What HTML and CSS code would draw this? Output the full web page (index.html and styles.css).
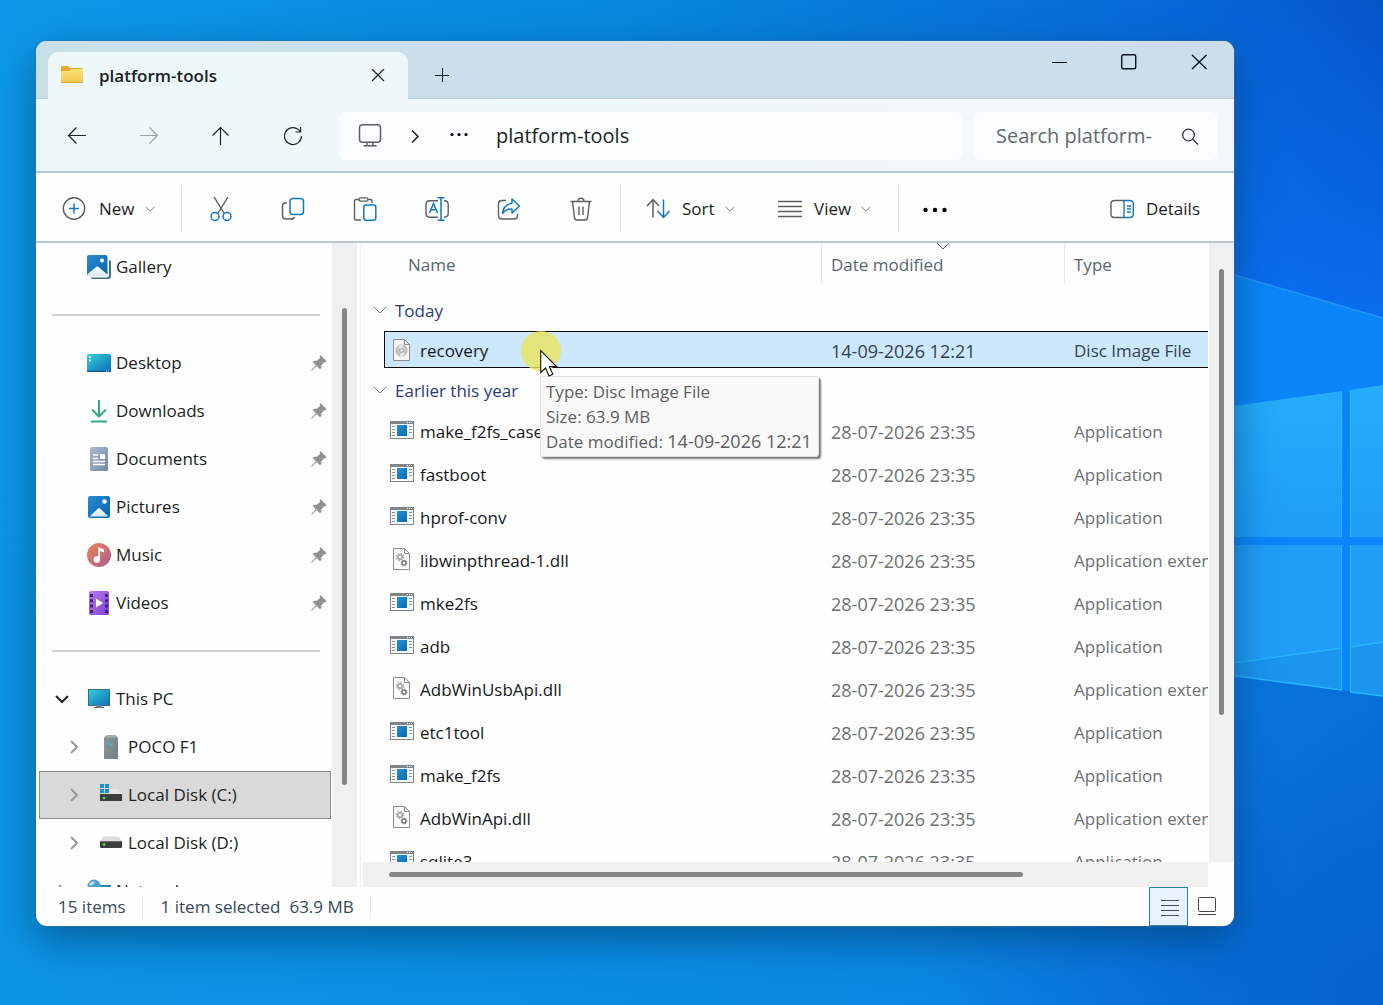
FILE: index.html
```html
<!DOCTYPE html>
<html lang="en">
<head>
<meta charset="utf-8">
<meta name="viewport" content="width=device-width, initial-scale=1">
<title>platform-tools</title>
<link rel="stylesheet" href="styles.css">
</head>
<body>
<svg class="defs" aria-hidden="true">
  <defs>
    <linearGradient id="g-blue" x1="0" y1="0" x2="1" y2="1"><stop offset="0" stop-color="#2a8bd0"/><stop offset="1" stop-color="#0464ae"/></linearGradient>
    <linearGradient id="g-desk" x1="0" y1="0" x2="1" y2="1"><stop offset="0" stop-color="#36cde0"/><stop offset="1" stop-color="#0b6fb4"/></linearGradient>
    <linearGradient id="g-hill" x1="0" y1="0" x2="0" y2="1"><stop offset="0" stop-color="#fff"/><stop offset="1" stop-color="#d5e9f8"/></linearGradient>
    <linearGradient id="g-doc" x1="0" y1="0" x2="1" y2="1"><stop offset="0" stop-color="#a9b9c9"/><stop offset="1" stop-color="#7289a3"/></linearGradient>
    <linearGradient id="g-music" x1="0" y1="0" x2="1" y2="1"><stop offset="0" stop-color="#ea8353"/><stop offset="1" stop-color="#ab5f94"/></linearGradient>
    <linearGradient id="g-video" x1="0" y1="0" x2="1" y2="1"><stop offset="0" stop-color="#b97bea"/><stop offset="1" stop-color="#7d42d6"/></linearGradient>
    <linearGradient id="g-phone" x1="0" y1="0" x2="1" y2="1"><stop offset="0" stop-color="#8e999f"/><stop offset="1" stop-color="#737c82"/></linearGradient>
    <linearGradient id="g-folder" x1="0" y1="0" x2="0" y2="1"><stop offset="0" stop-color="#fbe07e"/><stop offset="1" stop-color="#f2c744"/></linearGradient>
    <linearGradient id="g-exe" x1="0" y1="0" x2="1" y2="1"><stop offset="0" stop-color="#2494d8"/><stop offset="1" stop-color="#0468b4"/></linearGradient>
  </defs>
  <symbol id="down" viewBox="0 0 14 14"><path d="M1 4L7 10L13 4" fill="none" stroke="currentColor"/></symbol>
  <symbol id="right" viewBox="0 0 14 14"><path d="M4 1L10 7L4 13" fill="none" stroke="currentColor"/></symbol>
  <symbol id="pin" viewBox="0 0 16 16"><path d="M9.600 .300L15.700 6.200L14.300 7.300L13.200 7.200L10.500 10.200L10.200 13.200L9 14.300L5.600 10.900L1 15.800L.200 15.100L4.900 10.300L1.800 7.100L2.900 5.900L6 5.600L9 2.900L8.700 1.300Z" fill="#8f9396"/></symbol>
  <symbol id="drive" viewBox="0 0 24 24"><path d="M4 5.500H20L23 11H1Z" fill="#dcdcdc"/><rect x="1" y="10" width="22" height="7" rx="1" fill="#3c3f40"/><rect x="1" y="10" width="22" height="1" fill="#6b6b6b"/><circle cx="5" cy="13.500" r="1.300" fill="#62d84e"/></symbol>
  <symbol id="exe" viewBox="0 0 24 24"><rect x=".5" y="3.500" width="23" height="17" fill="#f7fbfd" stroke="#7f8588"/><path d="M0 3H24V6H0Z" fill="#7f8588"/><path d="M17 4.500H18M19 4.500H20M21 4.500H22" stroke="#fff"/><path d="M2 8.500H5M2 11.500H5M2 14.500H5M2 17.500H5M19 8.500H22M19 11.500H22M19 14.500H22" stroke="#8b979e"/><rect x="7" y="7" width="10" height="11" fill="url(#g-exe)"/></symbol>
  <symbol id="dll" viewBox="0 0 24 24"><path d="M3.500 1.500H14.500L19.500 6.500V22.500H3.500Z" fill="#fcfcfc" stroke="#8b8b8b"/><path d="M14.500 1.500V6.500H19.500" fill="none" stroke="#8b8b8b"/><circle cx="10" cy="10" r="2.200" fill="none" stroke="#aaa" stroke-width="1.800"/><circle cx="10" cy="10" r="3.700" fill="none" stroke="#aaa" stroke-width="1.200" stroke-dasharray="1.450 1.450"/><circle cx="14" cy="16" r="2" fill="none" stroke="#777" stroke-width="1.500"/><circle cx="14" cy="16" r="3" fill="none" stroke="#777" stroke-width=".8" stroke-dasharray="1.200 1.150"/></symbol>
  <symbol id="img" viewBox="0 0 24 24"><path d="M3.500 1.500H14.500L19.500 6.500V22.500H3.500Z" fill="#f6f6f6" stroke="#8b8b8b"/><path d="M14.500 1.500V6.500H19.500" fill="none" stroke="#8b8b8b"/><circle cx="11.500" cy="12.500" r="5.500" fill="#c5c7c9" stroke="#aaa"/><path d="M11.500 12.500L8 8.500A5.500 5.500 0 0 1 13 7.200ZM11.500 12.500L15 16.500A5.500 5.500 0 0 1 10 17.800Z" fill="#e8e8e8"/><circle cx="11.500" cy="12.500" r="1.800" fill="#fff" stroke="#999"/></symbol>
</svg>

<main class="desktop">
  <svg class="wallpaper" viewBox="0 0 1383 1005" preserveAspectRatio="xMaxYMid slice" aria-hidden="true">
    <defs>
      <linearGradient id="w-base" x1="0" y1="0" x2="1" y2="0"><stop offset="0" stop-color="#0c98e8"/><stop offset=".45" stop-color="#0788dd"/><stop offset=".85" stop-color="#0668d8"/><stop offset="1" stop-color="#0555c8"/></linearGradient>
      <linearGradient id="w-low" x1="0" y1="0" x2="1" y2="0"><stop offset="0" stop-color="#0c94e4"/><stop offset=".5" stop-color="#0a8be2"/><stop offset=".9" stop-color="#0a80e4"/><stop offset="1" stop-color="#0878e0"/></linearGradient>
      <linearGradient id="w-fade" x1="0" y1="0" x2="0" y2="1"><stop offset=".45" stop-color="#fff" stop-opacity="0"/><stop offset=".7" stop-color="#fff"/></linearGradient>
      <mask id="w-mask"><rect width="1383" height="1005" fill="url(#w-fade)"/></mask>
      <linearGradient id="w-right" x1="0" y1="0" x2="0" y2="1"><stop offset="0" stop-color="#0a70f6" stop-opacity="0"/><stop offset="1" stop-color="#0a72f8"/></linearGradient>
      <linearGradient id="w-pane" x1="0" y1="0" x2="0" y2="1"><stop offset="0" stop-color="#25adfa"/><stop offset="1" stop-color="#1f9df8"/></linearGradient>
      <radialGradient id="w-corner" gradientUnits="userSpaceOnUse" cx="1383" cy="1005" r="460"><stop offset="0" stop-color="#0562d0"/><stop offset=".3" stop-color="#0562d0" stop-opacity=".8"/><stop offset="1" stop-color="#0562d0" stop-opacity="0"/></radialGradient>
    </defs>
    <rect width="1383" height="1005" fill="url(#w-base)"/>
    <path d="M1100 0H1383V320H1100Z" fill="url(#w-right)" opacity=".8"/>
    <rect width="1383" height="1005" fill="url(#w-low)" mask="url(#w-mask)"/>
    <rect width="1383" height="1005" fill="url(#w-corner)"/>
    <path d="M1183 260L1383 318V696L1183 669Z" fill="#0b86f8"/>
    <path d="M1183 260L1383 318" stroke="#2396f6" stroke-width="1.500"/>
    <path d="M1183 413L1342 391V537H1183ZM1350 390L1383 385V537H1350Z" fill="url(#w-pane)"/>
    <path d="M1183 545H1342V690L1183 669ZM1350 545H1383V696L1350 692Z" fill="#209df7"/>
    <path d="M1183 670L1342 648V690L1183 669ZM1350 647L1383 642V696L1350 692Z" fill="#1b95ee"/>
    <path d="M1183 670L1342 648M1350 647L1383 642M1341.500 391V537M1341.500 545V690M1183 669L1342 690M1350 692L1383 696M1350.500 390V537M1350.500 545V692" stroke="#27b6fb" stroke-width="1.300" fill="none"/>
  </svg>

  <section class="window" aria-label="platform-tools">
    <header class="titlebar">
      <div class="tab">
        <svg class="i24" viewBox="0 0 24 24"><path d="M1 3.500Q1 2 2.500 2H8L10.500 4H21.500Q23 4 23 5.500V18H1Z" fill="#e2ab2d"/><path d="M1 7H9L11 5H23V18Q23 19 22 19H2Q1 19 1 18Z" fill="url(#g-folder)"/><path d="M1 18.500H23" stroke="#dba93a"/></svg>
        <span class="tab-name">platform-tools</span>
        <button class="plain" aria-label="Close tab"><svg class="i14" viewBox="0 0 14 14"><path d="M1 0L13 12M13 0L1 12" stroke="#1c2226" stroke-width="1.200"/></svg></button>
      </div>
      <button class="plain new-tab" aria-label="New tab"><svg class="i14" viewBox="0 0 14 14"><path d="M0 7.500H14M7.500 0V14" stroke="#1c2226"/></svg></button>
      <div class="caption">
        <button class="plain" aria-label="Minimize"><svg class="i16" viewBox="0 0 16 16"><path d="M1 8.500H16" stroke="#111" stroke-width="1"/></svg></button>
        <button class="plain" aria-label="Maximize"><svg class="i16" viewBox="0 0 16 16"><rect x=".7" y=".7" width="14" height="14" rx="1.500" fill="none" stroke="#0b1620" stroke-width="1.400"/></svg></button>
        <button class="plain" aria-label="Close"><svg class="i16" viewBox="0 0 16 16"><path d="M1 1L15.500 15M15.500 1L1 15" stroke="#0b1620" stroke-width="1.400"/></svg></button>
      </div>
    </header>

    <div class="navbar">
      <div class="nav-buttons">
        <button class="plain" aria-label="Back"><svg class="i20" viewBox="0 0 20 20"><path d="M19 9.500H1.500M9.500 1.500L1.500 9.500L9.500 17.500" fill="none" stroke="#1c2226" stroke-width="1.200"/></svg></button>
        <button class="plain" aria-label="Forward"><svg class="i20" viewBox="0 0 20 20"><path d="M1 9.500H18.500M10.500 1.500L18.500 9.500L10.500 17.500" fill="none" stroke="#9aa5a8" stroke-width="1.200"/></svg></button>
        <button class="plain" aria-label="Up"><svg class="i20" viewBox="0 0 20 20"><path d="M9.500 19V1.500M1.500 9.500L9.500 1.500L17.500 9.500" fill="none" stroke="#1c2226" stroke-width="1.200"/></svg></button>
        <button class="plain" aria-label="Refresh"><svg class="i20" viewBox="0 0 20 20"><path d="M18.500 10A8.500 8.500 0 1 1 15 3.200L17.300 5.700M17.600 1V6H12.500" fill="none" stroke="#1c2226" stroke-width="1.200"/></svg></button>
      </div>
      <nav class="address" aria-label="Address">
        <button class="plain" aria-label="This PC"><svg class="i24" viewBox="0 0 24 24"><rect x="1.500" y=".8" width="21" height="17.500" rx="3" fill="none" stroke="#5a5f62" stroke-width="1.500"/><path d="M9 18.500V21.500M15 18.500V21.500M5.500 21.700H18.500" stroke="#5a5f62" stroke-width="1.400"/></svg></button>
        <svg class="i14 crumb-arrow" viewBox="0 0 14 14"><path d="M4 1.500L10 7.500L4 13.500" fill="none" stroke="#1c2226" stroke-width="1.500"/></svg>
        <button class="plain" aria-label="More folders"><svg class="i18" viewBox="0 0 18 18"><circle cx="2" cy="7.500" r="1.600"/><circle cx="9" cy="7.500" r="1.600"/><circle cx="16" cy="7.500" r="1.600"/></svg></button>
        <a class="crumb" href="#files">platform-tools</a>
      </nav>
      <form class="search">
        <input type="search" aria-label="Search platform-tools" placeholder="Search platform-">
        <button class="plain" type="button" aria-label="Search"><svg class="i18" viewBox="0 0 18 18"><circle cx="7.500" cy="8" r="5.800" fill="none" stroke="#333" stroke-width="1.300"/><path d="M11.500 12L17 17.500" stroke="#333" stroke-width="1.300"/></svg></button>
      </form>
    </div>

    <div class="toolbar" role="toolbar" aria-label="Commands">
      <button class="plain cmd cmd-new"><svg class="i24" viewBox="0 0 24 24" fill="none"><circle cx="12" cy="11.500" r="10.700" stroke="#5a5f62" stroke-width="1.400"/><path d="M12 6.500V16.500M7 11.500H17" stroke="#1278bd" stroke-width="1.500"/></svg><span>New</span><svg class="i10"><use href="#down"/></svg></button>
      <span class="rule"></span>
      <button class="plain cmd-icon" aria-label="Cut"><svg class="i24" viewBox="0 0 24 24" fill="none"><path d="M5 0L15.500 17M19 0L8.500 17" stroke="#5a5f62" stroke-width="1.400"/><circle cx="6" cy="19.500" r="4" stroke="#1278bd" stroke-width="1.500"/><circle cx="18" cy="19.500" r="4" stroke="#1278bd" stroke-width="1.500"/></svg></button>
      <button class="plain cmd-icon" aria-label="Copy"><svg class="i24" viewBox="0 0 24 24" fill="none"><rect x="9" y="1.500" width="13.500" height="16" rx="3" stroke="#1278bd" stroke-width="1.500"/><path d="M6 6H4.500Q1.500 6 1.500 9V18.500Q1.500 22 5 22H10.500Q13 22 13.500 20" stroke="#5a5f62" stroke-width="1.500"/></svg></button>
      <button class="plain cmd-icon" aria-label="Paste"><svg class="i24" viewBox="0 0 24 24" fill="none"><path d="M6 2.500H3Q1.500 2.500 1.500 4V21.500Q1.500 23 3 23H8M14.500 2.500H17.500Q19 2.500 19 4V6" stroke="#5a5f62" stroke-width="1.400"/><rect x="6" y=".8" width="9" height="3.400" rx="1.700" stroke="#5a5f62" stroke-width="1.300"/><rect x="10.800" y="8" width="12" height="15.300" rx="2" stroke="#1278bd" stroke-width="1.500"/></svg></button>
      <button class="plain cmd-icon" aria-label="Rename"><svg class="i24" viewBox="0 0 24 24" fill="none"><path d="M13 3.800H4.500Q1 3.800 1 7.500V16.500Q1 20.200 4.500 20.200H13M19 3.800Q23.200 3.800 23.200 7.500V16.500Q23.200 20.200 19 20.200" stroke="#5a5f62" stroke-width="1.400"/><path d="M16 1V23M12.500 .8H19.500M12.500 23.200H19.500M4.500 16L8.500 6.500L12.500 16M6 12.800H11" stroke="#1278bd" stroke-width="1.500"/></svg></button>
      <button class="plain cmd-icon" aria-label="Share"><svg class="i24" viewBox="0 0 24 24" fill="none"><path d="M9 3.500H5Q1.500 3.500 1.500 7V18.500Q1.500 22 5 22H17Q20.500 22 20.500 18.500V17" stroke="#5a5f62" stroke-width="1.400"/><path d="M15 2L22.500 9L15 16V12Q9 11.500 5.500 16.500Q6.500 7.500 15 6.300Z" stroke="#1278bd" stroke-width="1.500" stroke-linejoin="round"/></svg></button>
      <button class="plain cmd-icon" aria-label="Delete"><svg class="i24" viewBox="0 0 24 24" fill="none" stroke="#5a5f62" stroke-width="1.400"><path d="M1.500 4.500H22.500M3.500 4.500L5.500 21Q6 23 8 23H16Q18 23 18.500 21L20.500 4.500M9 4.500Q9 1.200 12 1.200Q15 1.200 15 4.500M10 9.500V18M14 9.500V18"/></svg></button>
      <span class="rule"></span>
      <button class="plain cmd cmd-sort"><svg class="i24" viewBox="0 0 24 24" fill="none"><path d="M7 20.500V2.500M1 9L7 2.500L13 9" stroke="#5a5f62" stroke-width="1.500"/><path d="M17.500 2.500V20.500M11.500 14L17.500 20.500L23.500 14" stroke="#1278bd" stroke-width="1.500"/></svg><span>Sort</span><svg class="i10"><use href="#down"/></svg></button>
      <button class="plain cmd cmd-view"><svg class="i24" viewBox="0 0 24 24"><path d="M0 4.500H24M0 9.500H24M0 14.500H24M0 19.500H24" stroke="#5a5f62" stroke-width="1.400"/></svg><span>View</span><svg class="i10"><use href="#down"/></svg></button>
      <span class="rule"></span>
      <button class="plain cmd-icon" aria-label="See more"><svg class="i24" viewBox="0 0 24 24"><circle cx="2.500" cy="13" r="2.200"/><circle cx="12" cy="13" r="2.200"/><circle cx="21.500" cy="13" r="2.200"/></svg></button>
      <button class="plain cmd cmd-details"><svg class="i24" viewBox="0 0 24 24" fill="none"><path d="M14 3.500H4.500Q1 3.500 1 7V17Q1 20.500 4.500 20.500H14" stroke="#5a5f62" stroke-width="1.400"/><path d="M14 3.500V20.500M14 3.500H19.500Q23.300 3.500 23.300 7V17Q23.300 20.500 19.500 20.500H14M17 9H21M17 12H21M17 15H21" stroke="#1278bd" stroke-width="1.400"/></svg><span>Details</span></button>
    </div>

    <div class="content">
      <nav class="sidebar" aria-label="Folders">
        <a class="place" href="#gallery"><svg class="i24" viewBox="0 0 24 24"><path d="M4 5H22Q24 5 24 7V21Q24 24 21 24H6Q3.500 24 3 21Z" fill="#3d6f8c"/><path d="M2 0H19Q22 0 22 2V20Q22 22.500 19 22.500H2Q0 22 0 20V2Q0 0 2 0Z" fill="#fff"/><rect width="20.500" height="21" rx="2" fill="url(#g-blue)"/><path d="M0 19.500L9 12Q10 11 11.500 12L20.500 19.500Q20 21 18.500 21H2Q.5 21 0 19.500Z" fill="url(#g-hill)"/><circle cx="15" cy="5.500" r="2" fill="#fff"/></svg><span>Gallery</span></a>
        <hr>
        <a class="place" href="#desktop"><svg class="i24" viewBox="0 0 24 24"><rect y="3" width="24" height="18" rx="1.500" fill="url(#g-desk)"/><path d="M0 20.300H24" stroke="#0b5f93" stroke-width="1.400"/><path d="M2 6H4M2 9.500H4" stroke="#d8f6ff" stroke-width="2"/><path d="M19 20H22" stroke="#cdeaff" stroke-dasharray="1 1"/></svg><span>Desktop</span><svg class="i16 pin"><use href="#pin"/></svg></a>
        <a class="place" href="#downloads"><svg class="i24" viewBox="0 0 24 24"><path d="M12 1V17M5 10.500L12 17.500L19 10.500M4 22.500H20" fill="none" stroke="#35ab85" stroke-width="2"/></svg><span>Downloads</span><svg class="i16 pin"><use href="#pin"/></svg></a>
        <a class="place" href="#documents"><svg class="i24" viewBox="0 0 24 24"><rect x="3" width="18" height="24" rx="1.500" fill="url(#g-doc)"/><path d="M6 8H11M6 11.500H11M6 14.500H18M6 17.500H18" stroke="#fff" stroke-width="1.400"/><rect x="13" y="7" width="5" height="5" fill="#fff"/></svg><span>Documents</span><svg class="i16 pin"><use href="#pin"/></svg></a>
        <a class="place" href="#pictures"><svg class="i24" viewBox="0 0 24 24"><rect x="1" y="1" width="22" height="22" rx="2" fill="url(#g-blue)"/><path d="M2.500 21.500L11 13.500Q12 12.500 13 13.500L21.500 21.500Z" fill="url(#g-hill)"/><circle cx="17.500" cy="6.500" r="2.300" fill="#fff"/></svg><span>Pictures</span><svg class="i16 pin"><use href="#pin"/></svg></a>
        <a class="place" href="#music"><svg class="i24" viewBox="0 0 24 24"><circle cx="12" cy="12" r="12" fill="url(#g-music)"/><circle cx="9.800" cy="16.500" r="3.200" fill="#fff"/><path d="M11.300 16.500V4L17 6.500V9.500L13 8V16.500Z" fill="#fff"/></svg><span>Music</span><svg class="i16 pin"><use href="#pin"/></svg></a>
        <a class="place" href="#videos"><svg class="i24" viewBox="0 0 24 24"><rect x="2" width="20" height="24" rx="1.500" fill="url(#g-video)"/><path d="M4.500 3V22M19.500 3V22" stroke="#42207c" stroke-width="3" stroke-dasharray="3 2.300"/><path d="M9 7.500L16 12L9 16.500Z" fill="#fff"/></svg><span>Videos</span><svg class="i16 pin"><use href="#pin"/></svg></a>
        <hr>
        <a class="place" href="#pc"><svg class="i14 open"><use href="#down"/></svg><svg class="i24" viewBox="0 0 24 24"><rect x="1.500" y="2.500" width="21" height="16" fill="url(#g-desk)" stroke="#3c6c84"/><path d="M9 19.500H15" stroke="#888" stroke-width="2"/><path d="M7 20.500H17" stroke="#666"/></svg><span>This PC</span></a>
        <a class="place child" href="#poco"><svg class="i14 closed"><use href="#right"/></svg><svg class="i24" viewBox="0 0 24 24"><path d="M5 2.500L8 0H16L19 2.500V24H5Z" fill="url(#g-phone)"/><path d="M5 2.500L8 0H16L19 2.500Z" fill="#a9b0b4"/><circle cx="12" cy="9" r="1.600" fill="#27c5d8"/></svg><span>POCO F1</span></a>
        <a class="place child current" href="#c"><svg class="i14 closed"><use href="#right"/></svg><svg class="i24" viewBox="0 0 24 24"><path d="M8 6H19L23 11H8Z" fill="#e6e6e6"/><rect x="1" y="11" width="22" height="7" fill="#3c3f40"/><circle cx="5" cy="15" r="1.300" fill="#62d84e"/><path d="M1 1H5V5H1ZM6 1H10V5H6ZM1 6H5V10H1ZM6 6H10V10H6Z" fill="#1b8fd6"/></svg><span>Local Disk (C:)</span></a>
        <a class="place child" href="#d"><svg class="i14 closed"><use href="#right"/></svg><svg class="i24"><use href="#drive"/></svg><span>Local Disk (D:)</span></a>
        <a class="place" href="#network"><svg class="i14 closed"><use href="#right"/></svg><svg class="i24" viewBox="0 0 24 24"><rect x="8" y="6" width="16" height="11" fill="#2b87a8"/><circle cx="7" cy="7" r="6.500" fill="#4c9fc8"/><path d="M2 5Q5 1 8 3Q7 6 3 7Z" fill="#b3dced"/></svg><span>Network</span></a>
      </nav>
      <div class="vtrack side-track"><div class="thumb"></div></div>

      <section class="pane">
        <div class="files" id="files">
          <table>
            <colgroup><col class="c-gutter"><col><col class="c-date"><col class="c-type"></colgroup>
            <thead>
              <tr><td></td><th scope="col" class="h-name"><div>Name</div></th><th scope="col"><div class="ruled">Date modified<svg class="i14 sorted"><use href="#down"/></svg></div></th><th scope="col"><div class="ruled">Type</div></th></tr>
            </thead>
            <tbody>
              <tr class="group"><th colspan="4"><button class="plain"><svg class="i14"><use href="#down"/></svg>Today</button></th></tr>
              <tr class="selected"><td></td><td><div class="file"><svg class="i24"><use href="#img"/></svg>recovery</div></td><td class="date">14-09-2026 12:21</td><td>Disc Image File</td></tr>
            </tbody>
            <tbody>
              <tr class="group"><th colspan="4"><button class="plain"><svg class="i14"><use href="#down"/></svg>Earlier this year</button></th></tr>
              <tr><td></td><td><div class="file"><svg class="i24"><use href="#exe"/></svg>make_f2fs_casefold</div></td><td class="date">28-07-2026 23:35</td><td>Application</td></tr>
              <tr><td></td><td><div class="file"><svg class="i24"><use href="#exe"/></svg>fastboot</div></td><td class="date">28-07-2026 23:35</td><td>Application</td></tr>
              <tr><td></td><td><div class="file"><svg class="i24"><use href="#exe"/></svg>hprof-conv</div></td><td class="date">28-07-2026 23:35</td><td>Application</td></tr>
              <tr><td></td><td><div class="file"><svg class="i24"><use href="#dll"/></svg>libwinpthread-1.dll</div></td><td class="date">28-07-2026 23:35</td><td>Application extension</td></tr>
              <tr><td></td><td><div class="file"><svg class="i24"><use href="#exe"/></svg>mke2fs</div></td><td class="date">28-07-2026 23:35</td><td>Application</td></tr>
              <tr><td></td><td><div class="file"><svg class="i24"><use href="#exe"/></svg>adb</div></td><td class="date">28-07-2026 23:35</td><td>Application</td></tr>
              <tr><td></td><td><div class="file"><svg class="i24"><use href="#dll"/></svg>AdbWinUsbApi.dll</div></td><td class="date">28-07-2026 23:35</td><td>Application extension</td></tr>
              <tr><td></td><td><div class="file"><svg class="i24"><use href="#exe"/></svg>etc1tool</div></td><td class="date">28-07-2026 23:35</td><td>Application</td></tr>
              <tr><td></td><td><div class="file"><svg class="i24"><use href="#exe"/></svg>make_f2fs</div></td><td class="date">28-07-2026 23:35</td><td>Application</td></tr>
              <tr><td></td><td><div class="file"><svg class="i24"><use href="#dll"/></svg>AdbWinApi.dll</div></td><td class="date">28-07-2026 23:35</td><td>Application extension</td></tr>
              <tr><td></td><td><div class="file"><svg class="i24"><use href="#exe"/></svg>sqlite3</div></td><td class="date">28-07-2026 23:35</td><td>Application</td></tr>
            </tbody>
          </table>
        </div>
        <div class="vtrack"><div class="thumb"></div></div>
        <div class="htrack"><div class="thumb"></div></div>
        <div class="click-spot"></div>
        <div class="tooltip" role="tooltip">Type: Disc Image File<br>Size: 63.9 MB<br>Date modified: <span class="date">14-09-2026 12:21</span></div>
        <svg class="pointer" viewBox="0 0 19 28" aria-hidden="true"><path d="M.7 1.500V23.500L5.500 19L9 27L12.800 25.300L9.400 17.500H16.500Z" fill="#fff" stroke="#111" stroke-width="1.100"/></svg>
      </section>
    </div>

    <footer class="status">
      <span class="count">15 items</span>
      <span class="selection"><span>1 item selected</span><span>63.9 MB</span></span>
      <button class="plain mode on" aria-label="Details view"><svg class="i20" viewBox="0 0 20 20"><path d="M2 3.500H20M2 8.500H20M2 13.500H20M2 18.500H20" stroke="#40525c"/></svg></button>
      <button class="plain mode" aria-label="Large icons view"><svg class="i20" viewBox="0 0 20 20"><rect x=".5" y=".5" width="17" height="14" rx="1" fill="none" stroke="#444"/><path d="M0 17.500H18" stroke="#444"/></svg></button>
    </footer>
  </section>
</main>
</body>
</html>
```
FILE: styles.css
```css
* { box-sizing: border-box; }

body {
  margin: 0;
  font: 17px/24px "Open Sans", "Noto Sans", sans-serif;
  color: #1b1f22;
  overflow: hidden;
}

a { color: inherit; text-decoration: none; }
svg { display: block; flex: none; }

.defs { position: absolute; width: 0; height: 0; }
.i10 { width: 10px; height: 10px; }
.i14 { width: 14px; height: 14px; }
.i16 { width: 16px; height: 16px; }
.i18 { width: 18px; height: 18px; }
.i20 { width: 20px; height: 20px; }
.i24 { width: 24px; height: 24px; }

.plain {
  display: flex;
  align-items: center;
  justify-content: center;
  padding: 0;
  border: 0;
  background: none;
  font: inherit;
  color: inherit;
}

.desktop {
  position: relative;
  display: flex;
  height: 100vh;
  padding: 41px 149px 79px 36px;
  background: #0b8be0;
}
.wallpaper { position: absolute; inset: 0; width: 100%; height: 100%; }

.window {
  position: relative;
  display: flex;
  flex: 1;
  flex-direction: column;
  min-width: 0;
  overflow: hidden;
  border-radius: 11px;
  background: #fefefe;
  box-shadow: 0 0 0 1px #3b6f9c80, 0 14px 40px #004070a0;
}

/* Title bar */
.titlebar {
  display: flex;
  height: 58px;
  padding: 11px 0 0 12px;
  background: linear-gradient(90deg, #c8dfe8, #cddeeb);
  border-bottom: 1px solid #b6ccd6;
}
.tab {
  display: flex;
  align-items: center;
  width: 360px;
  height: 48px;
  padding: 0 23px 0 12px;
  border-radius: 11px 11px 0 0;
  background: #eef8fb;
}
.tab-name { flex: 1; margin-left: 15px; font-weight: 600; }
.new-tab { width: 68px; }
.caption {
  display: flex;
  height: 20px;
  margin-left: auto;
}
.caption .plain { width: 70px; }

/* Navigation bar */
.navbar {
  display: flex;
  height: 74px;
  padding: 13px 17px 11px 5px;
  background: linear-gradient(90deg, #eef8fb, #f2f7fb);
  border-bottom: 2px solid #b3cbd0;
}
.nav-buttons { display: flex; margin-right: 10px; }
.nav-buttons .plain { width: 72px; }
.address {
  display: flex;
  flex: 1;
  align-items: center;
  min-width: 0;
  margin-right: 12px;
  padding-left: 19px;
  border-radius: 6px;
  background: #fafdfe;
  font-size: 20px;
}
.crumb-arrow { margin: 0 28px 0 26px; }
.crumb { margin-left: 28px; }
.search {
  display: flex;
  align-items: center;
  width: 243px;
  padding: 0 18px 0 22px;
  border-radius: 6px;
  background: #fafdfe;
}
.search input {
  flex: 1;
  min-width: 0;
  padding: 0;
  border: 0;
  outline: 0;
  background: none;
  font: inherit;
  font-size: 20px;
}
.search input::placeholder { color: #65696c; opacity: 1; }

/* Command bar */
.toolbar {
  display: flex;
  align-items: center;
  height: 70px;
  padding-top: 4px;
  border-bottom: 2px solid #b7c9c9;
}
.rule { width: 1px; height: 48px; background: #e6e8e9; }
.cmd { justify-content: flex-start; }
.cmd .i10 { margin-left: 10px; color: #555; }
.cmd-new { width: 145px; padding-left: 26px; }
.cmd-new span { margin-left: 13px; }
.cmd-icon { width: 72px; }
.rule + .cmd-icon[aria-label="Cut"] { margin-left: 3px; }
.cmd-icon + .rule { margin-left: 3px; }
.cmd-sort { width: 132px; padding-left: 25px; }
.cmd-view { width: 145px; padding-left: 25px; }
.cmd-sort span, .cmd-view span, .cmd-details span { margin-left: 12px; }
.cmd-details { margin-left: auto; padding-right: 34px; }

/* Body */
.content { display: flex; flex: 1; min-height: 0; }

.sidebar { width: 296px; overflow: hidden; }
.sidebar hr {
  height: 2px;
  margin: 23px 12px 23px 16px;
  border: 0;
  background: #cfd1d2;
}
.place {
  display: flex;
  align-items: center;
  height: 48px;
  margin: 0 1px 0 3px;
  padding: 0 3px 0 47px;
  border: 1px solid transparent;
}
.place span { margin-left: 5px; }
.place .pin { margin-left: auto; }
.place .open, .place .closed { margin: 0 18px 0 -32px; color: #999; stroke-width: 2px; }
.place .open { color: #222; }
.child { padding-left: 59px; }
.current { background: #d9d9d9; border-color: #8c8c8c; }

.vtrack { width: 25px; background: #f0f0f0; }
.vtrack .thumb { width: 5px; height: 72%; margin: 26px 0 0 10px; }
.side-track .thumb { height: 74%; margin-top: 65px; }
.thumb { border-radius: 3px; background: #868686; }

.pane {
  position: relative;
  display: grid;
  grid-template: minmax(0, 1fr) 25px / minmax(0, 1fr) 25px;
  flex: 1;
  min-width: 0;
  margin-left: 3px;
  padding-left: 2px;
  border-left: 1px solid #f0f2f2;
}
.files { overflow: hidden; margin-right: 1px; }
.htrack { display: flex; align-items: center; margin-right: 1px; background: #f0f0f0; }
.htrack .thumb { width: 75%; height: 5px; margin-left: 26px; }

table { width: 100%; table-layout: fixed; border-collapse: separate; border-spacing: 0; }
.c-gutter { width: 21px; }
.c-date { width: 243px; }
.c-type { width: 144px; }
th { padding: 0; font-weight: 400; text-align: left; }
thead th, thead td { height: 45px; color: #56676f; vertical-align: top; }
thead div { position: relative; height: 40px; padding-left: 10px; line-height: 44px; }
thead .h-name div { padding-left: 24px; }
thead .ruled { border-left: 1px solid #e3e7e8; padding-left: 9px; }
.sorted { position: absolute; top: -4px; left: 114px; }
.group th { height: 43px; padding: 3px 0 0 10px; color: #2b3a78; }
.group svg { margin: 0 8px 3px 0; color: #777; }
tbody td {
  height: 43px;
  padding: 0 0 2px 10px;
  overflow: hidden;
  white-space: nowrap;
  color: #6c7070;
}
tbody td:first-child { padding: 0; }
.file { display: flex; align-items: center; height: 24px; margin-left: -4px; color: #16191b; }
.file svg { margin: 0 6px 3px 0; }
.date { font-size: 18px; }
.selected td { height: 37px; padding: 3px 0 0 10px; color: #33434e; background: #cce8fd; border: solid #0c0c0c; border-width: 1px 0; }
.selected td:first-child { background: none; border: 0; }
.selected td:nth-child(2) { border-left-width: 1px; padding-left: 9px; }

.tooltip {
  position: absolute;
  top: 133px;
  left: 179px;
  padding: 2px 6px 2px 5px;
  border: 1px solid #e2e2e2;
  border-radius: 3px;
  background: #f9f9f9;
  box-shadow: 2px 2px 2px #777;
  line-height: 25px;
  color: #5d5f60;
  white-space: nowrap;
}
.click-spot {
  position: absolute;
  top: 88px;
  left: 160px;
  width: 40px;
  height: 40px;
  border-radius: 50%;
  background: #e8e45cd0;
}
.pointer { position: absolute; top: 106px; left: 179px; width: 19px; height: 28px; }

/* Status bar */
.status {
  display: flex;
  align-items: center;
  height: 39px;
  padding: 0 7px 0 22px;
  color: #33495a;
}
.count, .selection { line-height: 24px; border-right: 1px solid #e8eaec; }
.count { padding-right: 16px; }
.selection { display: flex; gap: 9px; margin-right: auto; padding: 0 16px 0 18px; }
.mode { width: 39px; height: 39px; border: 1px solid transparent; }
.mode.on { border-color: #2a8290; background: #e7f2fc; }
```
